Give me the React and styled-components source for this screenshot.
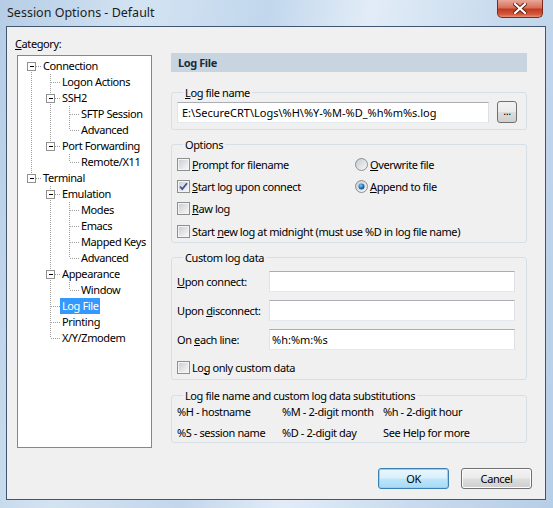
import React from 'react';
import styled, { createGlobalStyle } from 'styled-components';

const GlobalStyle = createGlobalStyle`
  html, body { margin: 0; padding: 0; }
  body {
    font-family: "Noto Sans", "Open Sans", sans-serif;
    font-size: 11px;
    letter-spacing: -0.4px;
    color: #000;
  }
`;

const Window = styled.div`
  width: 553px;
  height: 508px;
  display: flex;
  flex-direction: column;
  overflow: hidden;
  background: linear-gradient(100deg, #b5cde6 0%, #d3e3f2 22%, #c2d7ec 42%, #e2ecf7 58%, #c8dbee 78%, #b7cee7 100%);
`;

const TitleBar = styled.div`
  height: 26px;
  display: flex;
  align-items: flex-start;
  justify-content: space-between;
  padding-left: 7px;
`;

const Title = styled.div`
  font-size: 12.5px;
  letter-spacing: 0;
  line-height: 26px;
  color: #1c1c1c;
`;

const CloseButton = styled.div`
  width: 44px;
  height: 17px;
  margin-right: 10px;
  border: 1px solid #7b2a1c;
  border-top: none;
  border-radius: 0 0 5px 5px;
  background: linear-gradient(#e8a899 0%, #d8705a 45%, #c23a20 55%, #d45a3d 85%, #e9927a 100%);
  display: flex;
  align-items: center;
  justify-content: center;
`;

const Frame = styled.div`
  flex: 1;
  display: flex;
  padding: 0 7px 8px 6px;
`;

const Client = styled.div`
  flex: 1;
  display: flex;
  flex-direction: column;
  background: #f0f0f0;
  border: 1px solid #3f5570;
  padding: 9px 0 10px 10px;
`;

const Main = styled.div`
  display: flex;
  align-items: flex-start;
  gap: 19px;
`;

const LeftColumn = styled.div`
  width: 135px;
  display: flex;
  flex-direction: column;
`;

const FieldLabel = styled.div`
  line-height: 15px;
  margin-left: -2px;
  margin-bottom: 4px;
`;

const TreeBox = styled.div`
  box-sizing: border-box;
  height: 393px;
  background: #fff;
  border: 1px solid #828790;
  padding: 2px 0 0 4px;
`;

const TreeRow = styled.div`
  display: flex;
  height: 16px;
  align-items: center;
`;

const TreeLabel = styled.span`
  height: 16px;
  line-height: 16px;
  padding: 0 2px;
  white-space: nowrap;
  background: ${(p) => (p.$selected ? '#3399ff' : 'transparent')};
  color: ${(p) => (p.$selected ? '#fff' : '#000')};
`;

const RightColumn = styled.div`
  width: 356px;
  margin-top: 17px;
  display: flex;
  flex-direction: column;
`;

const PaneHeader = styled.div`
  height: 19px;
  line-height: 19px;
  padding-left: 7px;
  background: #c8d5e1;
  font-weight: bold;
  color: #1d2c3c;
`;

const Group = styled.fieldset`
  margin: ${(p) => p.$top || 8}px 0 0 0;
  border: 1px solid #d5dfe5;
  border-radius: 3px;
  padding: ${(p) => p.$pad || '1px 9px 6px 5px'};
  min-width: 0;
`;

const Legend = styled.legend`
  margin-left: 6px;
  padding: 0 2px;
  line-height: 15px;
`;

const FileRow = styled.div`
  display: flex;
  align-items: center;
  gap: 8px;
`;

const TextInput = styled.div`
  box-sizing: border-box;
  height: 21px;
  line-height: 19px;
  padding: 0 ${(p) => p.$pad ?? 4}px;
  background: #fff;
  border: 1px solid;
  border-color: #abadb3 #dbdfe6 #e3e9ef #e2e3ea;
  white-space: nowrap;
  overflow: hidden;
  letter-spacing: ${(p) => (p.$wide ? '0' : '-0.4px')};
  flex: ${(p) => (p.$grow ? 1 : 'none')};
`;

const SmallButton = styled.div`
  box-sizing: border-box;
  width: 20px;
  height: 22px;
  border: 1px solid #707070;
  border-radius: 3px;
  background: linear-gradient(#f2f2f2 0%, #ebebeb 48%, #dddddd 52%, #cfcfcf 100%);
  text-align: center;
  line-height: 18px;
`;

const OptionsGrid = styled.div`
  display: grid;
  grid-template-columns: 178px 1fr;
  grid-auto-rows: 22px;
  margin-top: ${(p) => p.$top || 0}px;
`;

const Option = styled.label`
  display: flex;
  align-items: center;
  gap: 2px;
  white-space: nowrap;
  grid-column: ${(p) => (p.$wide ? '1 / span 2' : 'auto')};
  padding-top: ${(p) => p.$drop || 0}px;
`;

const CustomGrid = styled.div`
  display: grid;
  grid-template-columns: 92px 246px;
  grid-auto-rows: 21px;
  row-gap: 8px;
  align-items: center;
  padding-top: 6px;
`;

const SubstGrid = styled.div`
  display: grid;
  grid-template-columns: 105px 101px auto;
  grid-auto-rows: 16px;
  row-gap: 5px;
  align-items: center;
  white-space: nowrap;
`;

const ButtonRow = styled.div`
  margin-top: auto;
  display: flex;
  justify-content: flex-end;
  gap: 12px;
  padding-right: 13px;
`;

const DialogButton = styled.div`
  box-sizing: border-box;
  width: 71px;
  height: 21px;
  line-height: 19px;
  text-align: center;
  border-radius: 3px;
  border: 1px solid ${(p) => (p.$default ? '#3c7fb1' : '#707070')};
  background: ${(p) =>
    p.$default
      ? 'linear-gradient(#eaf6fd 0%, #d9f0fc 48%, #bee6fd 52%, #a7d9f5 100%)'
      : 'linear-gradient(#f2f2f2 0%, #ebebeb 48%, #dddddd 52%, #cfcfcf 100%)'};
  box-shadow: ${(p) => (p.$default ? 'inset 0 0 0 1px #90d3f5' : 'inset 0 0 0 1px #fcfcfc')};
`;

const Key = styled.span`
  text-decoration: underline;
  text-underline-offset: 1px;
`;

const CheckBox = ({ checked }) => (
  <svg width="13" height="13" viewBox="0 0 13 13" style={{ flex: 'none' }}>
    <defs>
      <linearGradient id="cbg" x1="0" y1="0" x2="1" y2="1">
        <stop offset="0" stopColor="#cbcfd5" />
        <stop offset="1" stopColor="#f6f6f6" />
      </linearGradient>
    </defs>
    <rect x="0.5" y="0.5" width="12" height="12" fill="#f4f4f4" stroke="#8e8f8f" />
    <rect x="2" y="2" width="9" height="9" fill="url(#cbg)" />
    {checked && (
      <path d="M3 6.5 L5.3 9 L10 3.2" fill="none" stroke="#3c5597" strokeWidth="1.8" />
    )}
  </svg>
);

const Radio = ({ checked }) => (
  <svg width="13" height="13" viewBox="0 0 13 13" style={{ flex: 'none' }}>
    <defs>
      <linearGradient id="rbg" x1="0" y1="0" x2="1" y2="1">
        <stop offset="0" stopColor="#c4c8cd" />
        <stop offset="1" stopColor="#fafafa" />
      </linearGradient>
      <radialGradient id="rdot" cx="0.4" cy="0.35" r="0.7">
        <stop offset="0" stopColor="#8fd0f8" />
        <stop offset="0.5" stopColor="#2d7cc4" />
        <stop offset="1" stopColor="#15467a" />
      </radialGradient>
    </defs>
    <circle cx="6.5" cy="6.5" r="6" fill="url(#rbg)" stroke="#8e8f8f" />
    {checked && <circle cx="6.5" cy="6.5" r="3" fill="url(#rdot)" />}
  </svg>
);

const Connector = ({ first, last, expander }) => (
  <svg width="19" height="16" viewBox="0 0 19 16" shapeRendering="crispEdges" style={{ flex: 'none' }}>
    <line x1="9.5" y1={first ? 8 : 0} x2="9.5" y2={last ? 8 : 16} stroke="#a0a0a0" strokeDasharray="1 1" />
    <line x1="10" y1="8.5" x2="19" y2="8.5" stroke="#a0a0a0" strokeDasharray="1 1" />
    {expander && (
      <g>
        <rect x="5.5" y="4.5" width="8" height="8" fill="#fff" stroke="#919191" />
        <line x1="7.5" y1="8.5" x2="12" y2="8.5" stroke="#000" />
      </g>
    )}
  </svg>
);

const Rail = ({ on }) => (
  <svg width="19" height="16" viewBox="0 0 19 16" shapeRendering="crispEdges" style={{ flex: 'none' }}>
    {on && <line x1="9.5" y1="0" x2="9.5" y2="16" stroke="#a0a0a0" strokeDasharray="1 1" />}
  </svg>
);

const tree = [
  {
    label: 'Connection',
    children: [
      { label: 'Logon Actions' },
      { label: 'SSH2', children: [{ label: 'SFTP Session' }, { label: 'Advanced' }] },
      { label: 'Port Forwarding', children: [{ label: 'Remote/X11' }] },
    ],
  },
  {
    label: 'Terminal',
    children: [
      {
        label: 'Emulation',
        children: [{ label: 'Modes' }, { label: 'Emacs' }, { label: 'Mapped Keys' }, { label: 'Advanced' }],
      },
      { label: 'Appearance', children: [{ label: 'Window' }] },
      { label: 'Log File', selected: true },
      { label: 'Printing' },
      { label: 'X/Y/Zmodem' },
    ],
  },
];

const flatten = (nodes, rails = [], out = []) => {
  nodes.forEach((node, i) => {
    const last = i === nodes.length - 1;
    out.push({
      label: node.label,
      selected: node.selected,
      rails,
      last,
      first: rails.length === 0 && i === 0,
      expander: !!node.children,
    });
    if (node.children) flatten(node.children, [...rails, !last], out);
  });
  return out;
};

const rows = flatten(tree);

const substitutions = [
  '%H - hostname', '%M - 2-digit month', '%h - 2-digit hour',
  '%S - session name', '%D - 2-digit day', 'See Help for more',
];

export default function App() {
  return (
    <Window>
      <GlobalStyle />
      <TitleBar>
        <Title>Session Options - Default</Title>
        <CloseButton>
          <svg width="14" height="11" viewBox="0 0 14 11">
            <path d="M2 1 L12 10 M12 1 L2 10" stroke="#5a2015" strokeWidth="4" strokeLinecap="square" />
            <path d="M2 1 L12 10 M12 1 L2 10" stroke="#fff" strokeWidth="2.2" strokeLinecap="square" />
          </svg>
        </CloseButton>
      </TitleBar>
      <Frame>
        <Client>
          <Main>
            <LeftColumn>
              <FieldLabel><Key>C</Key>ategory:</FieldLabel>
              <TreeBox>
                {rows.map((r, i) => (
                  <TreeRow key={i}>
                    {r.rails.map((on, j) => <Rail key={j} on={on} />)}
                    <Connector first={r.first} last={r.last} expander={r.expander} />
                    <TreeLabel $selected={r.selected}>{r.label}</TreeLabel>
                  </TreeRow>
                ))}
              </TreeBox>
            </LeftColumn>

            <RightColumn>
              <PaneHeader>Log File</PaneHeader>

              <Group $top={13}>
                <Legend><Key>L</Key>og file name</Legend>
                <FileRow>
                  <TextInput $grow $wide>E:\SecureCRT\Logs\%H\%Y-%M-%D_%h%m%s.log</TextInput>
                  <SmallButton>...</SmallButton>
                </FileRow>
              </Group>

              <Group $top={7} $pad="1px 9px 1px 5px">
                <Legend>Options</Legend>
                <OptionsGrid>
                  <Option><CheckBox /><span><Key>P</Key>rompt for filename</span></Option>
                  <Option><Radio /><span><Key>O</Key>verwrite file</span></Option>
                  <Option><CheckBox checked /><span><Key>S</Key>tart log upon connect</span></Option>
                  <Option><Radio checked /><span><Key>A</Key>ppend to file</span></Option>
                  <Option><CheckBox /><span><Key>R</Key>aw log</span></Option>
                  <span />
                  <Option $wide $drop={2}><CheckBox /><span>Start <Key>n</Key>ew log at midnight (must use %D in log file name)</span></Option>
                </OptionsGrid>
              </Group>

              <Group $top={7} $pad="0 9px 1px 5px">
                <Legend>Custom log data</Legend>
                <CustomGrid>
                  <span><Key>U</Key>pon connect:</span>
                  <TextInput $pad={2} />
                  <span>Upon <Key>d</Key>isconnect:</span>
                  <TextInput $pad={2} />
                  <span>On <Key>e</Key>ach line:</span>
                  <TextInput $pad={2} $wide>%h:%m:%s</TextInput>
                </CustomGrid>
                <OptionsGrid $top={6}>
                  <Option><CheckBox /><span>Lo<Key>g</Key> only custom data</span></Option>
                </OptionsGrid>
              </Group>

              <Group $top={8} $pad="0 9px 2px 5px">
                <Legend>Log file name and custom log data substitutions</Legend>
                <SubstGrid>
                  {substitutions.map((s) => <span key={s}>{s}</span>)}
                </SubstGrid>
              </Group>
            </RightColumn>
          </Main>

          <ButtonRow>
            <DialogButton $default>OK</DialogButton>
            <DialogButton>Cancel</DialogButton>
          </ButtonRow>
        </Client>
      </Frame>
    </Window>
  );
}
